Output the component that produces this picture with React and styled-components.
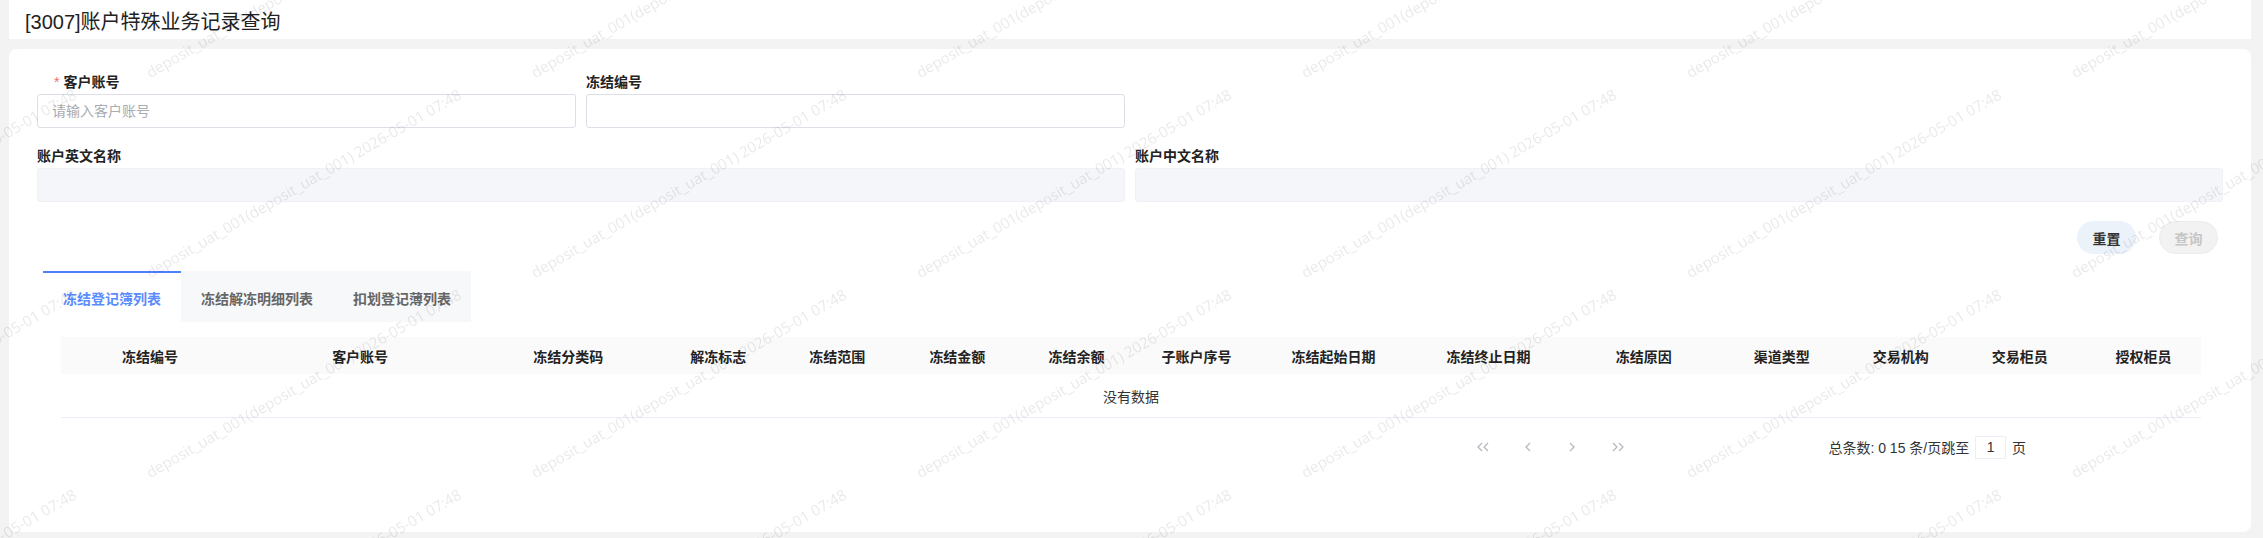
import React from "react";
import styled, { createGlobalStyle, css } from "styled-components";

const GlobalStyle = createGlobalStyle`
  body {
    margin: 0;
    background: #f3f3f3;
    font-family: "Liberation Sans", "Noto Sans CJK SC", sans-serif;
    color: #222;
  }
`;

const Page = styled.div`
  padding: 0 12px 6px 9px;
  height: 538px;
  box-sizing: border-box;
  display: flex;
  flex-direction: column;
`;

const Header = styled.div`
  height: 39px;
  background: #fff;
  display: flex;
  align-items: center;
  padding: 2px 0 0 16px;
  box-sizing: border-box;
  margin-bottom: 10px;
`;

const Title = styled.h1`
  margin: 0;
  font-size: 20px;
  font-weight: 400;
  color: #222;
`;

const Card = styled.div`
  flex: 1;
  background: #fff;
  border-radius: 8px;
  padding: 23px 28px 0;
`;

const FormGrid = styled.div`
  display: grid;
  grid-template-columns: repeat(4, 1fr);
  column-gap: 10px;
  row-gap: 18px;
`;

const Field = styled.div`
  grid-column: span ${(p) => p.$span || 1};
  display: flex;
  flex-direction: column;
`;

const Label = styled.label`
  font-size: 14px;
  font-weight: 700;
  line-height: 20px;
  margin-bottom: 2px;
  color: #222;
  padding-left: ${(p) => (p.$required ? "17px" : "0")};
`;

const Star = styled.span`
  color: #f56c6c;
  margin-right: 4px;
  font-weight: 400;
`;

const Input = styled.input`
  height: 34px;
  box-sizing: border-box;
  border: 1px solid #dcdfe6;
  border-radius: 3px;
  padding: 0 14px;
  font-size: 14px;
  font-family: inherit;
  outline: none;
  &::placeholder {
    color: #a8abb2;
  }
  ${(p) =>
    p.disabled &&
    css`
      background: #f5f6f9;
      border-color: #eff1f5;
    `}
`;

const Actions = styled.div`
  display: flex;
  justify-content: flex-end;
  gap: 23px;
  margin-top: 19px;
  padding-right: 5px;
`;

const PillButton = styled.button`
  width: 59px;
  height: 33px;
  border-radius: 17px;
  font-size: 14px;
  font-weight: 700;
  font-family: inherit;
  border: 1px solid ${(p) => (p.$primary ? "#ececec" : "transparent")};
  background: ${(p) => (p.$primary ? "#f2f2f2" : "#ecf2fa")};
  color: ${(p) => (p.$primary ? "#c6c6c6" : "#333")};
`;

const TabsRow = styled.div`
  display: flex;
`;

const TabBar = styled.div`
  display: inline-flex;
  margin: 17px 0 0 6px;
  background: #f7f8fa;
`;

const Tab = styled.div`
  height: 51px;
  box-sizing: border-box;
  padding: 0 20px;
  display: flex;
  align-items: center;
  font-size: 14px;
  font-weight: 700;
  color: #666;
  border-top: 2px solid transparent;
  ${(p) =>
    p.$active &&
    css`
      background: #fff;
      color: #5b8cff;
      border-top-color: #4f80fc;
    `}
`;

const TableWrap = styled.div`
  margin-top: 15px;
  padding: 0 22px 0 24px;
`;

const Table = styled.table`
  width: 100%;
  border-collapse: collapse;
  table-layout: fixed;
`;

const Th = styled.th`
  height: 37px;
  background: #fafafa;
  font-size: 14px;
  font-weight: 700;
  color: #222;
  text-align: center;
  padding: 0;
  white-space: nowrap;
`;

const EmptyCell = styled.td`
  height: 43px;
  border-bottom: 1px solid #ebeef5;
  text-align: center;
  font-size: 14px;
  color: #333;
  padding: 0;
`;

const Pager = styled.div`
  display: flex;
  justify-content: flex-end;
  align-items: center;
  height: 30px;
  margin-top: 14px;
  padding-right: 175px;
`;

const Arrows = styled.div`
  display: flex;
  margin-right: 188px;
`;

const ArrowBtn = styled.span`
  width: 45px;
  display: flex;
  justify-content: center;
  color: #b3b7bf;
`;

const PageInfo = styled.div`
  display: flex;
  align-items: center;
  font-size: 14px;
  color: #333;
  white-space: pre;
`;

const PageBox = styled.span`
  width: 31px;
  height: 23px;
  box-sizing: border-box;
  border: 1px solid #eaeef6;
  display: inline-flex;
  align-items: center;
  justify-content: center;
  margin: 0 2px;
`;

const Watermark = styled.div`
  position: fixed;
  inset: 0;
  overflow: hidden;
  pointer-events: none;
`;

const MarkGrid = styled.div`
  display: grid;
  grid-template-columns: repeat(8, 385px);
  grid-auto-rows: 200px;
  margin: -117px 0 0 -274px;
`;

const Mark = styled.div`
  display: flex;
  align-items: center;
  justify-content: center;
  span {
    transform: rotate(-30deg);
    white-space: nowrap;
    font-family: "Open Sans", "Liberation Sans", sans-serif;
    font-size: 15px;
    color: rgba(0, 0, 0, 0.09);
  }
`;

const Chevron = ({ double, dir }) => {
  const flip = dir === "right" ? "scale(-1,1)" : undefined;
  return (
    <svg
      width={double ? 14 : 7}
      height="10"
      viewBox={double ? "0 0 14 10" : "0 0 7 10"}
      fill="none"
      stroke="currentColor"
      strokeWidth="1.2"
      style={{ transform: flip }}
    >
      <path d="M6 1 L2 5 L6 9" />
      {double && <path d="M12 1 L8 5 L12 9" />}
    </svg>
  );
};

const columns = [
  ["冻结编号", 178],
  ["客户账号", 242],
  ["冻结分类码", 174],
  ["解冻标志", 126],
  ["冻结范围", 112],
  ["冻结金额", 128],
  ["冻结余额", 110],
  ["子账户序号", 130],
  ["冻结起始日期", 144],
  ["冻结终止日期", 166],
  ["冻结原因", 144],
  ["渠道类型", 132],
  ["交易机构", 106],
  ["交易柜员", 132],
  ["授权柜员", 115],
];

const tabs = ["冻结登记簿列表", "冻结解冻明细列表", "扣划登记薄列表"];

const markText = "deposit_uat_001(deposit_uat_001) 2026-05-01 07:48";

export default function App() {
  return (
    <>
      <GlobalStyle />
      <Page>
        <Header>
          <Title>[3007]账户特殊业务记录查询</Title>
        </Header>
        <Card>
          <FormGrid>
            <Field>
              <Label $required>
                <Star>*</Star>客户账号
              </Label>
              <Input placeholder="请输入客户账号" />
            </Field>
            <Field>
              <Label>冻结编号</Label>
              <Input />
            </Field>
            <Field $span={2} />
            <Field $span={2}>
              <Label>账户英文名称</Label>
              <Input disabled />
            </Field>
            <Field $span={2}>
              <Label>账户中文名称</Label>
              <Input disabled />
            </Field>
          </FormGrid>
          <Actions>
            <PillButton>重置</PillButton>
            <PillButton $primary disabled>
              查询
            </PillButton>
          </Actions>
          <TabsRow>
            <TabBar>
              {tabs.map((t, i) => (
                <Tab key={t} $active={i === 0}>
                  {t}
                </Tab>
              ))}
            </TabBar>
          </TabsRow>
          <TableWrap>
            <Table>
              <colgroup>
                {columns.map(([name, w]) => (
                  <col key={name} style={{ width: w }} />
                ))}
              </colgroup>
              <thead>
                <tr>
                  {columns.map(([name]) => (
                    <Th key={name}>{name}</Th>
                  ))}
                </tr>
              </thead>
              <tbody>
                <tr>
                  <EmptyCell colSpan={columns.length}>没有数据</EmptyCell>
                </tr>
              </tbody>
            </Table>
            <Pager>
              <Arrows>
                <ArrowBtn><Chevron double /></ArrowBtn>
                <ArrowBtn><Chevron /></ArrowBtn>
                <ArrowBtn><Chevron dir="right" /></ArrowBtn>
                <ArrowBtn><Chevron double dir="right" /></ArrowBtn>
              </Arrows>
              <PageInfo>
                总条数: 0 15 条/页跳至 <PageBox>1</PageBox> 页
              </PageInfo>
            </Pager>
          </TableWrap>
        </Card>
      </Page>
      <Watermark>
        <MarkGrid>
          {Array.from({ length: 32 }).map((_, i) => (
            <Mark key={i}>
              <span>{markText}</span>
            </Mark>
          ))}
        </MarkGrid>
      </Watermark>
    </>
  );
}
